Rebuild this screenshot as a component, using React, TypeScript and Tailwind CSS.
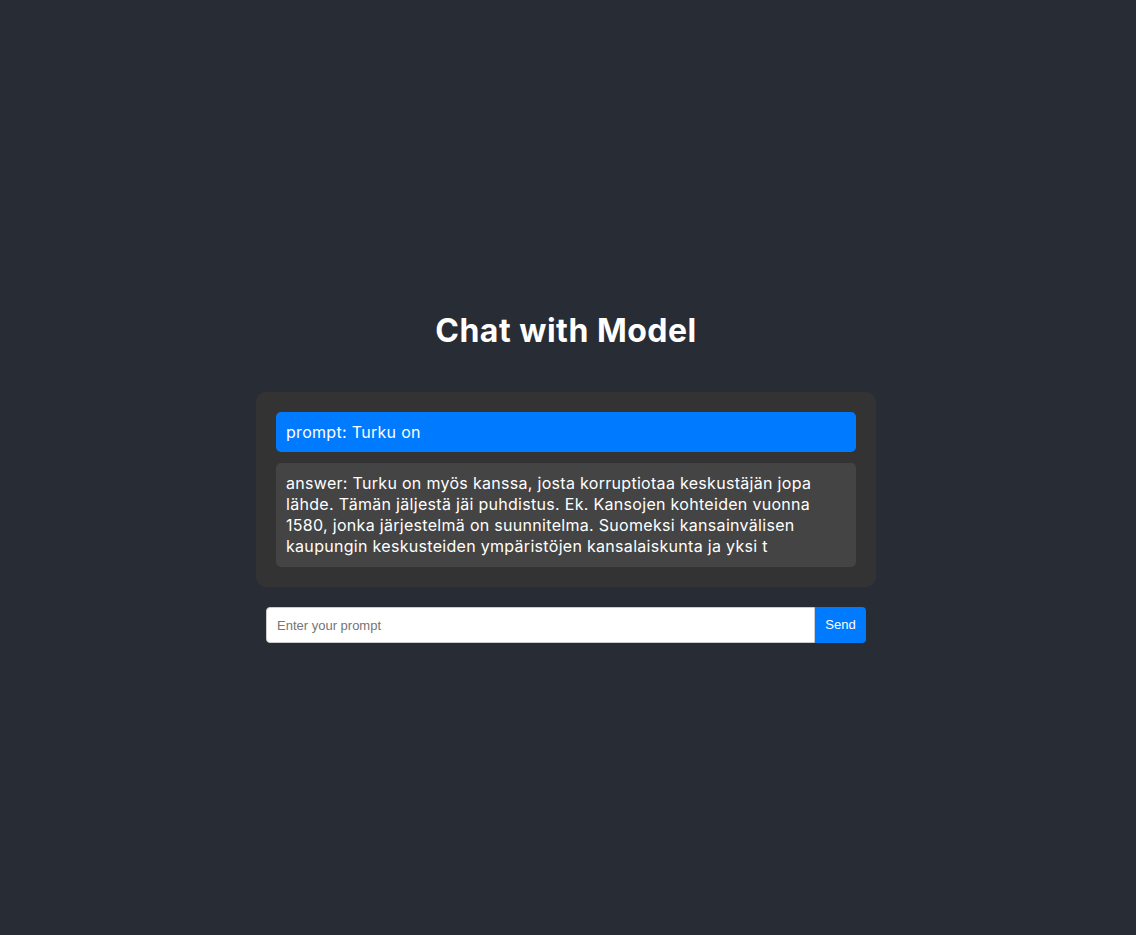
export default function App() {
  const messages = [
    { role: 'prompt', text: 'prompt: Turku on' },
    {
      role: 'answer',
      text: 'answer: Turku on myös kanssa, josta korruptiotaa keskustäjän jopa lähde. Tämän jäljestä jäi puhdistus. Ek. Kansojen kohteiden vuonna 1580, jonka järjestelmä on suunnitelma. Suomeksi kansainvälisen kaupungin keskusteiden ympäristöjen kansalaiskunta ja yksi t',
    },
  ];

  return (
    <div className="min-h-screen w-full bg-[#282c34] flex flex-col items-center justify-center pt-[19px] pr-[4px] font-['Inter',sans-serif] text-white">
      <h1 className="text-[32px] font-bold leading-[39px] tracking-[0.5px] mb-[42px]">Chat with Model</h1>

      <div className="w-[620px] bg-[#333333] rounded-[10px] p-[20px] flex flex-col gap-[11px]">
        {messages.map((m, i) => (
          <div
            key={i}
            className={
              m.role === 'prompt'
                ? 'bg-[#007bff] rounded-[5px] px-[10px] py-[10px] text-[16px] leading-[20px] tracking-[0.3px]'
                : 'bg-[#444444] rounded-[5px] px-[10px] py-[10px] text-[16px] leading-[21px] tracking-[0.3px]'
            }
          >
            {m.text}
          </div>
        ))}
      </div>

      <div className="w-[600px] mt-[20px] flex font-['Liberation_Sans',Arial,sans-serif]">
        <input
          type="text"
          placeholder="Enter your prompt"
          className="flex-1 h-[36px] bg-white border border-[#cccccc] rounded-l-[4px] px-[10px] text-[13px] text-black placeholder:text-[#757575] outline-none"
        />
        <button className="h-[36px] w-[51px] bg-[#007bff] rounded-r-[4px] text-white text-[13px]">
          Send
        </button>
      </div>
    </div>
  );
}
